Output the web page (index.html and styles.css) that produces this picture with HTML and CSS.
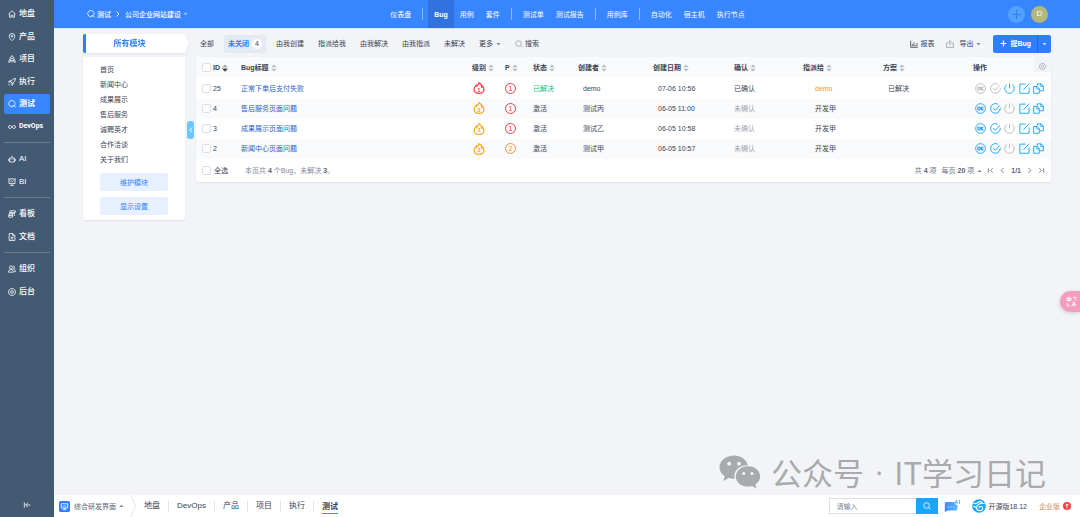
FILE: index.html
```html
<!DOCTYPE html>
<html lang="zh-CN">
<head>
<meta charset="utf-8">
<title>测试 - Bug</title>
<link rel="stylesheet" href="styles.css">
</head>
<body>
<svg class="defs" aria-hidden="true">
  <symbol id="i-sort" viewBox="0 0 6 8"><path d="M3 .6 5.700 3.300H.3z"/><path d="M3 7.400 5.700 4.700H.3z"/></symbol>
  <symbol id="i-sort-desc" viewBox="0 0 6 8"><path d="M3 .6 5.700 3.300H.3z" fill="#9a9fae"/><path d="M3 7.800 6 4.500H0z"/></symbol>
  <symbol id="i-caret" viewBox="0 0 6 4"><path d="M.5.8h5L3 3.400z" fill="currentColor"/></symbol>
  <symbol id="i-fire" viewBox="0 0 12 12"><path d="M5.800.7C6 2.300 4.200 3 3.800 4.300 3.500 3.900 3.300 3.500 3.300 3.100 2 4.300 1.100 5.500 1.100 7.200c0 2.500 2 4.200 4.900 4.200s4.900-1.700 4.900-4.200c0-1.500-.7-2.400-1.300-3.100-.1.700-.4 1-.8 1.200C8.900 3.200 7.700 1.400 5.800.7z"/></symbol>
  <symbol id="i-ok" viewBox="0 0 12 12"><circle cx="6" cy="6" r="5.300"/><path d="M5.500 6a1.300 1.600 0 1 1-2.600 0 1.300 1.600 0 1 1 2.600 0zM6.800 4.200v3.600M9.200 4.200 6.800 6.200l2.400 1.700" stroke-width="1.200"/></symbol>
  <symbol id="i-check" viewBox="0 0 12 12"><path d="M11.200 5.300A5.300 5.300 0 1 1 8.700 1.400M3.500 5.600l2.200 2.300 5.200-5.600"/></symbol>
  <symbol id="i-power" viewBox="0 0 12 12"><path d="M6 .6v5.200M3.300 1.600a5.200 5.200 0 1 0 5.400 0"/></symbol>
  <symbol id="i-edit" viewBox="0 0 12 12"><path d="M7.300 1.200H.9v10h10V5M4.800 7.400l6.300-6.600"/></symbol>
  <symbol id="i-copy" viewBox="0 0 12 12"><path d="M4.800 3V.9h4l2.500 2.400v5.200H7.200M8.500.9v2.700h2.800M.7 3.800h3.800l2.400 2.400v5H.7zM4.200 3.800v2.800h2.700"/></symbol>
  <symbol id="i-search" viewBox="0 0 12 12"><circle cx="5.300" cy="5.300" r="4.200"/><path d="m8.400 8.400 2.800 2.800"/></symbol>
  <symbol id="i-test" viewBox="0 0 12 12"><path d="M8.600 9.200A4.700 4.700 0 1 1 10.500 5.500c0 1.200-.4 2.200-1.100 3l1.900 2.600M6.500 8.300h2"/></symbol>
  <symbol id="i-gear" viewBox="0 0 12 12"><path d="M4.300 1h3.400l2.700 2 .8 3-.8 3-2.700 2H4.300L1.600 9 .8 6l.8-3z"/><circle cx="6" cy="6" r="2"/></symbol>
</svg>

<div class="app">
  <aside class="sidebar">
    <nav class="menu">
      <div class="group group-main">
        <a href="#"><svg class="icon" viewBox="0 0 12 12"><path d="M.8 6 6 1.200 11.200 6M2.400 5v6h2.400V8h2.400v3h2.400V5"/></svg>地盘</a>
        <a href="#"><svg class="icon" viewBox="0 0 12 12"><path d="M6 11.400C3.500 9 1.800 7 1.800 4.900a4.200 4.200 0 0 1 8.400 0C10.200 7 8.500 9 6 11.400z"/><circle cx="6" cy="4.900" r="1.300"/></svg>产品</a>
        <a href="#"><svg class="icon" viewBox="0 0 12 12"><path d="M3.300 8.500V4.200L6 .8l2.700 3.400v4.300zM3.300 6 1.200 9v2.200l2.600-1.500M8.700 6l2.100 3v2.200L8.200 9.700M6 8.500v2.700"/><circle cx="6" cy="5" r=".8"/></svg>项目</a>
        <a href="#"><svg class="icon" viewBox="0 0 12 12"><path d="M11.300.8C8 .9 5.500 2.700 4 5.600l2.300 2.300c3-1.400 4.900-3.800 5-7.100zM4.800 4.200 2 4.400.8 6.200l3.200-.5M7.600 7.200 7.400 10l-1.600 1.200.4-3.300M3 8.200.8 10.900M7.300 4.300l.6.600"/></svg>执行</a>
        <a href="#" class="active"><svg class="icon"><use href="#i-test"/></svg>测试</a>
        <a href="#" class="latin"><svg class="icon" viewBox="0 0 12 12"><path d="M6 6C4.900 4.500 4.100 3.800 3 3.800a2.200 2.200 0 0 0 0 4.400C4.100 8.200 4.900 7.500 6 6s1.900-2.200 3-2.200a2.200 2.200 0 0 1 0 4.400C7.900 8.200 7.100 7.500 6 6z"/></svg>DevOps</a>
      </div>
      <hr>
      <div class="group">
        <a href="#"><svg class="icon" viewBox="0 0 12 12"><path d="M6 1v3M2.300 4.500h7.400v6H2.300zM.6 6.200v2.600M11.400 6.200v2.600M4.500 6.600v1M7.500 6.600v1"/></svg>AI</a>
        <a href="#"><svg class="icon" viewBox="0 0 12 12"><path d="M.6 1.400h10.800M1.500 1.400v7h9v-7M6 8.400v2.800M3.500 11.200h5M3.500 5.800 5.200 4.200l1.200 1.400 2-2"/></svg>BI</a>
      </div>
      <hr>
      <div class="group">
        <a href="#"><svg class="icon" viewBox="0 0 12 12"><path d="M3 1.200h8.200l-.5 2.600H2.600zM1.800 4.800H10L9.600 7M1.200 6h5.600v4.800H1.200zM1.200 8.200h5.600M8.500 8.200h2"/></svg>看板</a>
        <a href="#"><svg class="icon" viewBox="0 0 12 12"><path d="M1.800.8h5.400l3.200 3.200v7.200H1.800zM7 .8v3.400h3.400M4 6.500h4M4 8.700h4"/></svg>文档</a>
      </div>
      <hr>
      <div class="group">
        <a href="#"><svg class="icon" viewBox="0 0 12 12"><circle cx="4.500" cy="3.700" r="2.300"/><path d="M.8 10.800C.8 8 2.300 6.800 4.500 6.800s3.600 1.200 3.600 4zM7.600 1.500c2.900 0 3 3.900.4 4.300 2 .3 3.200 1.600 3.200 4.200H9.500"/></svg>组织</a>
        <a href="#"><svg class="icon"><use href="#i-gear"/></svg>后台</a>
      </div>
    </nav>
    <button class="fold" aria-label="收起"><svg class="icon" viewBox="0 0 12 12"><path d="M2 1.800v8.400M11 6H4M7.200 2.800 4 6l3.200 3.200"/></svg></button>
  </aside>

  <div class="main">
    <header class="topbar">
      <div class="crumbs">
        <svg class="icon"><use href="#i-test"/></svg><a href="#">测试</a>
        <svg class="chev" viewBox="0 0 6 8"><path d="m1.500 1.500 2.500 2.500-2.500 2.500"/></svg>
        <a href="#">公司企业网站建设</a><svg class="caret"><use href="#i-caret"/></svg>
      </div>
      <nav class="topnav">
        <a href="#">仪表盘</a><i></i><a href="#" class="active">Bug</a><a href="#">用例</a><a href="#">套件</a><i></i><a href="#">测试单</a><a href="#">测试报告</a><i></i><a href="#">用例库</a><i></i><a href="#">自动化</a><a href="#">宿主机</a><a href="#">执行节点</a>
      </nav>
      <div class="user">
        <button class="round add" aria-label="添加"><svg viewBox="0 0 12 12"><path d="M6 1v10M1 6h10"/></svg></button>
        <button class="round avatar">D</button>
      </div>
    </header>

    <div class="content">
      <div class="toolbar">
        <div class="module-tag"><span>所有模块</span></div>
        <nav class="tabs">
          <a href="#">全部</a>
          <a href="#" class="active">未关闭<span class="badge">4</span></a>
          <a href="#">由我创建</a><a href="#">指派给我</a><a href="#">由我解决</a><a href="#">由我指派</a><a href="#">未解决</a>
          <a href="#">更多<svg class="caret"><use href="#i-caret"/></svg></a>
          <a href="#"><svg class="icon muted"><use href="#i-search"/></svg>搜索</a>
        </nav>
        <div class="actions">
          <a href="#"><svg class="icon" viewBox="0 0 12 12"><path d="M1 1v10h10.500M3.500 9.500V6M6 9.500V3.500M8.500 9.500v-2M10.600 9.500V4.500"/></svg>报表</a>
          <a href="#"><svg class="icon muted" viewBox="0 0 12 12"><path d="M3.500 4.500H.8v6.700h10.400V4.500H8.500M6 8V1M3.800 3 6 .9 8.200 3"/></svg>导出<svg class="caret"><use href="#i-caret"/></svg></a>
          <div class="split">
            <button class="create"><svg class="icon" viewBox="0 0 12 12"><path d="M6 1v10M1 6h10"/></svg>提Bug</button>
            <button class="more" aria-label="更多操作"><svg class="caret"><use href="#i-caret"/></svg></button>
          </div>
        </div>
      </div>

      <div class="columns">
        <section class="modules">
          <ul>
            <li><a href="#">首页</a></li><li><a href="#">新闻中心</a></li><li><a href="#">成果展示</a></li><li><a href="#">售后服务</a></li><li><a href="#">诚聘英才</a></li><li><a href="#">合作洽谈</a></li><li><a href="#">关于我们</a></li>
          </ul>
          <button>维护模块</button>
          <button>显示设置</button>
        </section>
        <button class="handle" aria-label="折叠"><svg viewBox="0 0 6 8"><path d="M4.200 1.500 1.800 4l2.400 2.500"/></svg></button>

        <section class="list">
          <table>
            <colgroup><col class="c-id"><col><col class="c-level"><col class="c-p"><col class="c-state"><col class="c-by"><col class="c-date"><col class="c-conf"><col class="c-to"><col class="c-plan"><col class="c-act"></colgroup>
            <thead>
              <tr>
                <th><div class="cell"><input type="checkbox" aria-label="全选">ID<svg class="sort desc"><use href="#i-sort-desc"/></svg></div></th>
                <th>Bug标题<svg class="sort"><use href="#i-sort"/></svg></th>
                <th>级别<svg class="sort"><use href="#i-sort"/></svg></th>
                <th>P<svg class="sort"><use href="#i-sort"/></svg></th>
                <th>状态<svg class="sort"><use href="#i-sort"/></svg></th>
                <th>创建者<svg class="sort"><use href="#i-sort"/></svg></th>
                <th>创建日期<svg class="sort"><use href="#i-sort"/></svg></th>
                <th>确认<svg class="sort"><use href="#i-sort"/></svg></th>
                <th>指派给<svg class="sort"><use href="#i-sort"/></svg></th>
                <th>方案<svg class="sort"><use href="#i-sort"/></svg></th>
                <th><div class="cell last">操作<button class="cog" aria-label="自定义列"><svg class="icon"><use href="#i-gear"/></svg></button></div></th>
              </tr>
            </thead>
            <tbody>
              <tr>
                <td><div class="cell"><input type="checkbox" aria-label="25">25</div></td>
                <td><a href="#">正常下单后支付失败</a></td>
                <td><span class="fire red"><svg><use href="#i-fire"/></svg><b>1</b></span></td>
                <td><span class="pri red">1</span></td>
                <td class="green">已解决</td><td class="in">demo</td><td class="in">07-06 10:56</td><td>已确认</td><td class="in2 orange">demo</td><td class="in">已解决</td>
                <td><div class="ops"><button disabled aria-label="确认"><svg><use href="#i-ok"/></svg></button><button disabled aria-label="解决"><svg><use href="#i-check"/></svg></button><button aria-label="关闭"><svg><use href="#i-power"/></svg></button><button aria-label="编辑"><svg><use href="#i-edit"/></svg></button><button aria-label="复制"><svg><use href="#i-copy"/></svg></button></div></td>
              </tr>
              <tr>
                <td><div class="cell"><input type="checkbox" aria-label="4">4</div></td>
                <td><a href="#">售后服务页面问题</a></td>
                <td><span class="fire"><svg><use href="#i-fire"/></svg><b>3</b></span></td>
                <td><span class="pri red">1</span></td>
                <td>激活</td><td class="in">测试丙</td><td class="in">06-05 11:00</td><td class="gray">未确认</td><td class="in2">开发甲</td><td></td>
                <td><div class="ops"><button aria-label="确认"><svg><use href="#i-ok"/></svg></button><button aria-label="解决"><svg><use href="#i-check"/></svg></button><button disabled aria-label="关闭"><svg><use href="#i-power"/></svg></button><button aria-label="编辑"><svg><use href="#i-edit"/></svg></button><button aria-label="复制"><svg><use href="#i-copy"/></svg></button></div></td>
              </tr>
              <tr>
                <td><div class="cell"><input type="checkbox" aria-label="3">3</div></td>
                <td><a href="#">成果展示页面问题</a></td>
                <td><span class="fire"><svg><use href="#i-fire"/></svg><b>3</b></span></td>
                <td><span class="pri red">1</span></td>
                <td>激活</td><td class="in">测试乙</td><td class="in">06-05 10:58</td><td class="gray">未确认</td><td class="in2">开发甲</td><td></td>
                <td><div class="ops"><button aria-label="确认"><svg><use href="#i-ok"/></svg></button><button aria-label="解决"><svg><use href="#i-check"/></svg></button><button disabled aria-label="关闭"><svg><use href="#i-power"/></svg></button><button aria-label="编辑"><svg><use href="#i-edit"/></svg></button><button aria-label="复制"><svg><use href="#i-copy"/></svg></button></div></td>
              </tr>
              <tr>
                <td><div class="cell"><input type="checkbox" aria-label="2">2</div></td>
                <td><a href="#">新闻中心页面问题</a></td>
                <td><span class="fire"><svg><use href="#i-fire"/></svg><b>3</b></span></td>
                <td><span class="pri">2</span></td>
                <td>激活</td><td class="in">测试甲</td><td class="in">06-05 10:57</td><td class="gray">未确认</td><td class="in2">开发甲</td><td></td>
                <td><div class="ops"><button aria-label="确认"><svg><use href="#i-ok"/></svg></button><button aria-label="解决"><svg><use href="#i-check"/></svg></button><button disabled aria-label="关闭"><svg><use href="#i-power"/></svg></button><button aria-label="编辑"><svg><use href="#i-edit"/></svg></button><button aria-label="复制"><svg><use href="#i-copy"/></svg></button></div></td>
              </tr>
            </tbody>
          </table>
          <div class="table-foot">
            <label><input type="checkbox">全选</label>
            <span class="summary">本页共 <b>4</b> 个Bug，未解决 <b>3</b>。</span>
            <div class="pager">
              <span>共 <b>4</b> 项</span>
              <a href="#">每页 <b>20</b> 项<svg class="caret up"><use href="#i-caret"/></svg></a>
              <a href="#" aria-label="首页"><svg class="pg" viewBox="0 0 8 8"><path d="M1.500 1.500v5M6.500 1.500 4 4l2.500 2.500"/></svg></a>
              <a href="#" aria-label="上一页"><svg class="pg" viewBox="0 0 8 8"><path d="M5.200 1.200 2.500 4l2.700 2.800"/></svg></a>
              <b>1/1</b>
              <a href="#" aria-label="下一页"><svg class="pg" viewBox="0 0 8 8"><path d="M2.800 1.200 5.500 4 2.800 6.800"/></svg></a>
              <a href="#" aria-label="末页"><svg class="pg" viewBox="0 0 8 8"><path d="M6.500 1.500v5M1.500 1.500 4 4 1.500 6.500"/></svg></a>
            </div>
          </div>
        </section>
      </div>
    </div>

    <footer class="bottombar">
      <a href="#" class="mode"><svg class="mode-icon" viewBox="0 0 12 12"><rect width="12" height="12" rx="2" fill="#2e7fff"/><path d="M2.500 3h7v4.600h-7zM6 7.600v1.600M4 9.400h4M4 5.200l1 .9 1-.9 1 .9 1-.9" fill="none" stroke="#fff" stroke-width=".9"/></svg>综合研发界面<svg class="caret up"><use href="#i-caret"/></svg></a>
      <svg class="divider" viewBox="0 0 6 22" preserveAspectRatio="none"><path d="M.5 0 5.500 11 .5 22"/></svg>
      <nav class="tasks"><a href="#">地盘</a><a href="#">DevOps</a><a href="#">产品</a><a href="#">项目</a><a href="#">执行</a><a href="#" class="active"><span>测试</span></a></nav>
      <form class="search">
        <input type="text" placeholder="请输入" aria-label="搜索内容">
        <button type="button" aria-label="搜索"><svg class="icon"><use href="#i-search"/></svg></button>
      </form>
      <a href="#" class="ai" aria-label="AI"><svg viewBox="0 0 17 14"><defs><linearGradient id="g"><stop stop-color="#3f8cff"/><stop offset="1" stop-color="#5bb4ff"/></linearGradient></defs><path d="M2 3h8.500c0 2 1.500 3 3 3v3.500a2 2 0 0 1-2 2H4L.8 13V4.500A1.500 1.500 0 0 1 2 3z" fill="url(#g)"/><path d="M4 8h1M6.700 8h1M9.400 8h1" stroke="#d8ecff" stroke-width="1"/><path d="m11 4.800 1.300-3.600 1.300 3.600M11.500 3.700h1.700M15.500 1v3.800" fill="none" stroke="#4a9dff" stroke-width=".8"/></svg></a>
      <a href="#" class="version"><svg viewBox="0 0 14 14"><circle cx="7" cy="7" r="6.800" fill="#16a8f8"/><path d="M2 4.200c2 1 3 .2 4-.8s2.800-1.200 4 .2M12.200 4.500C9 3.800 4.500 5.300 4.500 8.500c0 2.100 1.500 3.200 3.200 3.200 1.800 0 2.900-1.200 2.900-2.500 0-1.200-.9-2-2-2s-1.700.7-1.700 1.500M1.500 7.500c1-.2 1.800.2 2.300 1" fill="none" stroke="#fff" stroke-width="1.100" stroke-linecap="round"/></svg>开源版18.12</a>
      <a href="#" class="upgrade">企业版<svg viewBox="0 0 8 8"><circle cx="4" cy="4" r="4" fill="#fb3b41"/><path d="M4 6.400V2.400M2.400 3.400 4 1.800l1.600 1.600" fill="none" stroke="#fff" stroke-width="1"/></svg></a>
    </footer>
  </div>
</div>

<div class="watermark">
  <svg viewBox="0 0 42 34"><path d="M15 .5C6.900.5.500 5.700.5 12.200c0 3.700 2 6.900 5.200 9L4.300 26l5.300-2.900c1.700.5 3.500.7 5.400.7h.9c-2.300-7.100 4-14 13-13.600C27.500 4.500 21.800.5 15 .5z"/><path d="M29 11.300c-6.900 0-12.200 4.500-12.200 10.200S22.100 31.600 29 31.600c1.400 0 2.800-.2 4.100-.6l4.400 2.400-1.200-4c3-1.900 4.900-4.700 4.900-7.900 0-5.700-5.300-10.200-12.200-10.200z"/><g class="eyes"><circle cx="10.200" cy="8.700" r="1.900"/><circle cx="20" cy="8.700" r="1.900"/><circle cx="24.800" cy="18.500" r="1.600"/><circle cx="33" cy="18.500" r="1.600"/></g></svg>
  <span>公众号</span><span class="dot">·</span><span>IT学习日记</span>
</div>
<button class="translate" aria-label="翻译"><svg viewBox="0 0 12 12"><path d="M1 2.500h4.500v2.300H1zM3.200 1v5.500M7.500 1.500h3v3M1.500 8v2.700h3M6.500 11.200l2-5 2 5M7.200 9.600h2.600"/></svg></button>
</body>
</html>
```

FILE: styles.css
```css
* { box-sizing: border-box; }
body {
  margin: 0;
  background: #f2f4f7;
  color: #3c4353;
  font: 7px/1 "Liberation Sans", "Noto Sans CJK SC", sans-serif;
}
a { color: inherit; text-decoration: none; }
button { margin: 0; padding: 0; border: 0; background: none; color: inherit; font: inherit; }
svg { display: block; flex: none; fill: none; stroke: currentColor; }
input { margin: 0; font: inherit; }
input[type="checkbox"] {
  appearance: none;
  width: 9px;
  height: 9px;
  flex: none;
  border: 1px solid #dcdfe5;
  border-radius: 2px;
  background: #fff;
}
input[type="checkbox"]:checked { background: #2e7fff; }
.defs { position: absolute; width: 0; height: 0; }
.icon { width: 8px; height: 8px; stroke-width: 1.2; }
.muted { color: #9a9fa9; }
.caret { width: 5px; height: 4px; margin-left: 3px; stroke: none; color: #83899a; }
.caret.up { transform: rotate(180deg); }

.app { display: flex; min-height: 100vh; }

/* left navigation */
.sidebar {
  display: flex;
  flex-direction: column;
  justify-content: space-between;
  width: 54px;
  flex: none;
  padding: 4px 4px 8px;
  background: #435a73;
  color: #fff;
  font-size: 8px;
  font-weight: 500;
}
.group { display: flex; flex-direction: column; justify-content: space-between; height: 43px; }
.group-main { height: 133px; }
.group a { display: flex; align-items: center; gap: 3px; height: 20px; padding-left: 4px; border-radius: 2px; }
.group a.active { background: #3785ff; font-weight: 700; }
.group a.latin { font-family: Roboto, sans-serif; font-size: 7px; font-weight: 700; }
.sidebar hr { height: 1px; margin: 5px 0 6px; border: 0; background: #667c93; }
.fold { align-self: center; }

.main { display: flex; flex: 1; flex-direction: column; min-width: 0; }

/* header */
.topbar {
  display: grid;
  grid-template-columns: 1fr auto 1fr;
  align-items: center;
  height: 29px;
  padding: 0 32px 0 33px;
  border-bottom: 1px solid #d7e6fc;
  background: #3785ff;
  color: #fff;
}
.crumbs { display: flex; align-items: center; gap: 2px; font-weight: 500; }
.crumbs .caret { margin-left: 0; color: #a5c8ff; }
.chev { width: 6px; height: 8px; margin: 0 2px; }
.topnav { display: flex; align-items: center; height: 28px; }
.topnav a { display: flex; align-items: center; height: 28px; padding: 0 6px; }
.topnav a.active { background: #2f72e0; font-weight: 700; }
.topnav i { width: 1px; height: 12px; margin: 0 5px; background: #8cb8ff; }
.user { display: flex; justify-content: flex-end; gap: 6px; }
.round { display: flex; align-items: center; justify-content: center; width: 17px; height: 17px; border-radius: 50%; }
.add { background: #52a1ff; color: #2b7cf5; }
.add svg { width: 11px; height: 11px; }
.avatar { background: #b2b87c; font-size: 8px; }

/* toolbar */
.content { display: flex; flex: 1; flex-direction: column; gap: 4px; padding: 5px 29px 12px; }
.toolbar { display: flex; align-items: center; height: 19px; }
.module-tag { flex: none; width: 106px; filter: drop-shadow(0 1px 1px #dde1e8); }
.module-tag span {
  display: flex;
  align-items: center;
  justify-content: center;
  height: 19px;
  padding-right: 16px;
  border-left: 3px solid #2e7fff;
  border-radius: 2px;
  background: #fff;
  color: #2e7fff;
  font-size: 8px;
  font-weight: 700;
  clip-path: polygon(0 0, 102px 0, 100% 50%, 102px 100%, 0 100%);
}
.tabs { display: flex; align-items: center; gap: 14px; margin-left: 11px; }
.tabs a, .actions > a { display: flex; align-items: center; white-space: nowrap; }
.tabs a.active { gap: 3px; height: 18px; margin: 0 -4px; padding: 0 4px; border-radius: 2px; background: #e4eaf3; color: #2e7fff; font-weight: 700; }
.badge { display: flex; align-items: center; justify-content: center; width: 10px; height: 10px; border-radius: 50%; background: #fff; color: #3c4353; font-weight: 400; }
.tabs .icon, .actions > a .icon { margin-right: 2px; }
.actions { display: flex; align-items: center; gap: 12px; margin-left: auto; }
.actions > a:nth-child(2) .icon { margin-right: 5px; }
.split { display: flex; height: 18px; border-radius: 2px; background: #2e7fff; color: #fff; }
.create { display: flex; align-items: center; gap: 3px; padding: 0 6px 0 7px; font-weight: 700; }
.create .icon { stroke-width: 2; width: 7px; height: 7px; }
.more { display: flex; align-items: center; padding: 0 4px; border-left: 1px solid #2869d6; }
.more .caret { margin: 0; color: #c9deff; }

/* module tree */
.columns { display: flex; align-items: flex-start; }
.modules { width: 102px; flex: none; padding: 5px 17px; border-radius: 2px; background: #fff; box-shadow: 0 1px 2px #dde1e8; }
.modules ul { margin: 0 0 6px; padding: 0; list-style: none; }
.modules li { line-height: 15px; }
.modules button { display: block; width: 100%; height: 18px; border-radius: 2px; background: #e6f0ff; color: #2e7fff; }
.modules button + button { margin-top: 6px; }
.handle { display: flex; align-items: center; justify-content: center; width: 7px; height: 18px; margin: 64px 2px 0 2px; border-radius: 3px; background: #6cc5fd; color: #fff; }
.handle svg { width: 6px; height: 8px; }

/* bug table */
.list { flex: 1; min-width: 0; border-radius: 2px; background: #fff; box-shadow: 0 1px 2px #dde1e8; }
table { width: 100%; height: 102px; border-collapse: collapse; table-layout: fixed; }
.c-id { width: 45px; }
.c-level { width: 33px; }
.c-p { width: 28px; }
.c-state { width: 45px; }
.c-by { width: 75px; }
.c-date { width: 81px; }
.c-conf { width: 69px; }
.c-to { width: 80px; }
.c-plan { width: 90px; }
.c-act { width: 78px; }
th, td { height: 20px; padding: 0; text-align: left; vertical-align: middle; white-space: nowrap; }
th { height: 21px; background: #f9fafc; font-weight: 700; }
th:first-child, td:first-child { padding-left: 6px; }
tbody tr:nth-child(even) { background: #f8fafc; }
tbody a { color: #2a63c8; }
.cell { display: flex; align-items: center; gap: 2px; }
.cell.last { justify-content: space-between; height: 21px; }
.cog { display: flex; align-items: center; justify-content: center; align-self: flex-start; width: 17px; height: 15px; padding-top: 4px; background: #f0f3f8; color: #9a9fa9; }
.cog .icon { width: 7px; height: 7px; }
.sort { display: inline-block; width: 6px; height: 8px; margin-left: 2px; vertical-align: -2px; fill: #b5bac5; stroke: none; }
.sort.desc { margin-left: 0; fill: #3c4353; }
td.in { padding-left: 5px; }
td.in2 { padding-left: 12px; }
td.green { color: #12c27f; }
td.gray { color: #9fa4b0; }
td.orange { color: #ff9222; }
.fire { display: grid; place-items: center; width: 12px; height: 12px; margin-left: 1px; color: #fba922; }
.fire > * { grid-area: 1 / 1; }
.fire svg { width: 12px; height: 12px; stroke-width: 1.2; }
.fire b { padding-top: 3px; font-size: 6px; }
.pri { display: flex; align-items: center; justify-content: center; width: 11px; height: 11px; border: 1px solid currentColor; border-radius: 50%; color: #fb9232; }
.fire.red, .pri.red { color: #fb3b41; }
.ops { display: flex; justify-content: space-between; padding: 0 7px 0 2px; color: #18a6fd; }
.ops svg { width: 11px; height: 11px; }
.ops button:disabled { color: #b9b9b9; }

.table-foot { display: flex; align-items: center; height: 23px; padding: 0 6px; }
.table-foot label { display: flex; align-items: center; gap: 3px; }
.summary { margin-left: 17px; color: #838a9d; }
.table-foot b { color: #5b6272; }
.pager { display: flex; align-items: center; gap: 5px; margin-left: auto; color: #6b7284; }
.pager a { display: flex; align-items: center; white-space: pre; }
.pg { width: 7px; height: 7px; }

/* bottom bar */
.bottombar { display: flex; align-items: center; height: 22px; padding: 0 9px 0 5px; background: #fff; }
.mode { display: flex; align-items: center; color: #5b6272; }
.mode-icon { width: 11px; height: 11px; margin-right: 4px; stroke: none; }
.divider { width: 6px; height: 22px; margin-left: 6px; color: #e3e6eb; }
.tasks { display: flex; font-size: 8px; }
.tasks a { display: flex; align-items: center; height: 11px; padding: 0 8px; border-right: 1px solid #e0e3e8; }
.tasks a:last-child { border: 0; }
.tasks .active span { padding: 3px 0 2px; box-shadow: 0 1px #18a6fd; font-weight: 700; }
.search { display: flex; height: 16px; margin-left: auto; }
.search input { width: 87px; padding: 0 6px; border: 1px solid #dcdfe5; border-right: 0; border-radius: 0; outline: 0; color: inherit; }
.search input::placeholder { color: #7b8294; }
.search button { display: flex; align-items: center; justify-content: center; width: 22px; background: #18a6fd; color: #fff; }
.ai { margin-left: 6px; }
.ai svg { width: 17px; height: 14px; stroke: none; }
.version, .upgrade { display: flex; align-items: center; gap: 2px; }
.version { margin-left: 11px; }
.version svg { width: 14px; height: 14px; stroke: none; }
.upgrade { margin-left: 12px; gap: 3px; color: #c68a55; }
.upgrade svg { width: 8px; height: 8px; stroke: none; }

/* overlays */
.watermark {
  position: absolute;
  right: 34px;
  bottom: 27px;
  display: flex;
  align-items: center;
  gap: 10px;
  color: #a8aaac;
  font: 31px/36px "Noto Sans CJK SC", sans-serif;
  pointer-events: none;
}
.watermark .dot { font-family: "Liberation Sans", sans-serif; }
.watermark svg { width: 42px; height: 34px; fill: currentColor; stroke: none; }
.watermark .eyes { fill: #f2f4f7; }
.translate {
  position: absolute;
  top: 291px;
  right: 0;
  display: flex;
  align-items: center;
  width: 20px;
  height: 21px;
  padding-left: 6px;
  border-radius: 11px 0 0 11px;
  background: #f59dc0;
  box-shadow: 0 1px 4px #c9ccd4;
  color: #fff;
}
.translate svg { width: 11px; height: 11px; }
```
